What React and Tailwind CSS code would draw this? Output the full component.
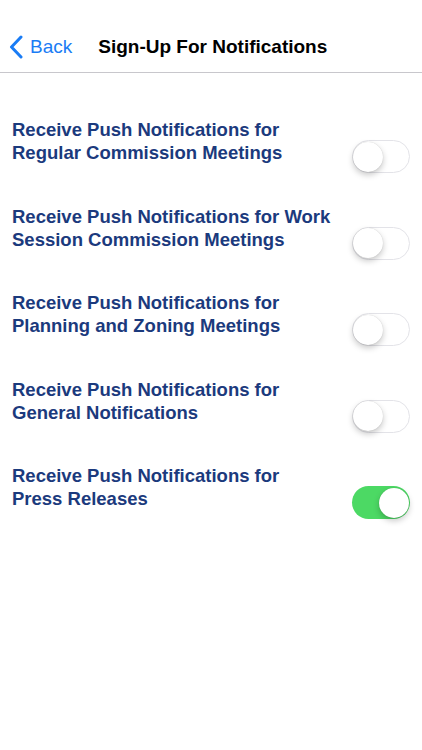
import { useState } from 'react';

const ROWS = [
  { id: 'regular', label: ['Receive Push Notifications for', 'Regular Commission Meetings'], on: false },
  { id: 'work', label: ['Receive Push Notifications for Work', 'Session Commission Meetings'], on: false },
  { id: 'planning', label: ['Receive Push Notifications for', 'Planning and Zoning Meetings'], on: false },
  { id: 'general', label: ['Receive Push Notifications for', 'General Notifications'], on: false },
  { id: 'press', label: ['Receive Push Notifications for', 'Press Releases'], on: true },
];

function Toggle({ on, onChange }) {
  return (
    <button
      onClick={onChange}
      className={`relative w-[58px] h-[33px] rounded-full shrink-0 transition-colors ${
        on ? 'bg-[#4cd964]' : 'bg-white border-[1.5px] border-[#e3e3e8]'
      }`}
    >
      <span
        className={`absolute top-1/2 -translate-y-1/2 w-[30px] h-[30px] rounded-full bg-white shadow-[0_3px_6px_rgba(0,0,0,0.22),0_0_1px_rgba(0,0,0,0.2)] ${
          on ? 'right-[1.5px]' : 'left-[0px]'
        }`}
      />
    </button>
  );
}

export default function App() {
  const [state, setState] = useState(() => Object.fromEntries(ROWS.map(r => [r.id, r.on])));

  return (
    <div className="w-[422px] h-[750px] bg-white" style={{ fontFamily: '"Liberation Sans", Arial, sans-serif' }}>
      {/* Nav bar */}
      <div className="h-[73px] pt-[22px] border-b border-[#c8c7cc] flex items-center">
        <div className="flex items-center pl-[9px] text-[#1a7cf5]">
          <svg width="14" height="24" viewBox="0 0 14 24" fill="none">
            <path d="M12 2L2.5 12L12 22" stroke="currentColor" strokeWidth="3" strokeLinecap="round" strokeLinejoin="round" />
          </svg>
          <span className="ml-[7px] text-[19px]">Back</span>
        </div>
        <h1 className="ml-[26px] text-[19px] font-semibold text-black">Sign-Up For Notifications</h1>
      </div>

      {/* Rows */}
      <div className="pt-[35px]">
        {ROWS.map(row => (
          <div key={row.id} className="h-[86.5px] flex justify-between pl-[12px] pr-[12px]">
            <div className="pt-[10px] text-[18.5px] leading-[23px] font-bold text-[#1b3a7d]">
              <div>{row.label[0]}</div>
              <div>{row.label[1]}</div>
            </div>
            <div className="pt-[32px]">
              <Toggle on={state[row.id]} onChange={() => setState(s => ({ ...s, [row.id]: !s[row.id] }))} />
            </div>
          </div>
        ))}
      </div>
    </div>
  );
}
